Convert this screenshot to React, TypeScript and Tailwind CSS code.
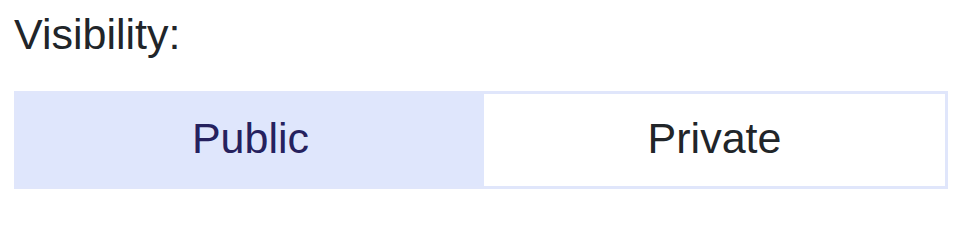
export default function App() {
  return (
    <div className="w-[968px] h-[216px] bg-white px-[14px] font-['Liberation_Sans',Arial,sans-serif]">
      <div className="pt-[9px] text-[43px] leading-[50px] text-[#212529]">Visibility:</div>
      <div className="mt-[32px] flex w-[934px] border-[3px] border-[#e0e6fb]">
        <button className="w-[467px] bg-[#dfe6fc] pt-[19px] pb-[23px] text-[43px] leading-[50px] text-[#25215e]">
          Public
        </button>
        <button className="flex-1 bg-white pt-[19px] pb-[23px] text-[43px] leading-[50px] text-[#212529]">
          Private
        </button>
      </div>
    </div>
  );
}
